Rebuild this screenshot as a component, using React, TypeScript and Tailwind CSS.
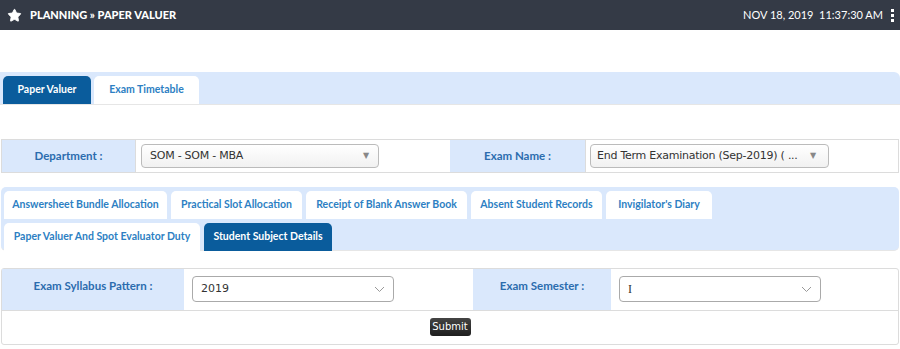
import { Star } from 'lucide-react';

const lato = { fontFamily: 'Lato, "Open Sans", sans-serif' };
const selectFont = { fontFamily: '"DejaVu Sans", Verdana, sans-serif' };

const topTabs = [
  { label: 'Paper Valuer', active: true, w: 'w-[88px]' },
  { label: 'Exam Timetable', active: false, w: 'w-[105px]' },
];

const subTabsRow1 = [
  { label: 'Answersheet Bundle Allocation', w: 'w-[163px]' },
  { label: 'Practical Slot Allocation', w: 'w-[131px]' },
  { label: 'Receipt of Blank Answer Book', w: 'w-[161px]' },
  { label: 'Absent Student Records', w: 'w-[131px]' },
  { label: "Invigilator's Diary", w: 'w-[106px]' },
];

const subTabsRow2 = [
  { label: 'Paper Valuer And Spot Evaluator Duty', w: 'w-[196px]', active: false },
  { label: 'Student Subject Details', w: 'w-[128px]', active: true },
];

function Tab({ label, active, w }: { label: string; active?: boolean; w: string }) {
  return (
    <div
      className={`${w} h-[28px] flex items-center justify-center rounded-t-[5px] text-[10.5px] font-bold whitespace-nowrap ${
        active ? 'bg-[#0a5c9c] text-white' : 'bg-white text-[#2d7fc3]'
      }`}
    >
      {label}
    </div>
  );
}

function Caret() {
  return <span className="text-[8px] text-[#888] leading-none">▼</span>;
}

function Chevron() {
  return (
    <svg width="11" height="7" viewBox="0 0 11 7" fill="none" stroke="#999" strokeWidth="1">
      <path d="M1 1l4.5 4.5L10 1" />
    </svg>
  );
}

export default function App() {
  return (
    <div className="w-[900px] h-[349px] bg-white overflow-hidden" style={lato}>
      {/* header */}
      <div className="h-[30px] bg-[#343a46] flex items-center pl-[7px] pr-[6px] text-white">
        <Star className="w-[15px] h-[15px] fill-white" strokeWidth={1.5} />
        <span className="ml-[8px] text-[11px] font-black">PLANNING » PAPER VALUER</span>
        <span className="ml-auto text-[11px] whitespace-pre">NOV 18, 2019  11:37:30 AM</span>
        <span className="ml-[8px] flex flex-col gap-[2px]">
          <span className="w-[3px] h-[3px] bg-white" />
          <span className="w-[3px] h-[3px] bg-white" />
          <span className="w-[3px] h-[3px] bg-white" />
        </span>
      </div>

      {/* main tabs */}
      <div className="mt-[42px] h-[33px] bg-[#dae8fc] rounded-tr-[6px] border-b border-[#e6e6e6] flex items-end gap-[3px] pl-[3px]">
        {topTabs.map((t) => (
          <Tab key={t.label} {...t} />
        ))}
      </div>

      {/* department row */}
      <div className="mt-[34px] mx-[1px] h-[34px] border border-[#dcdcdc] flex">
        <div className="w-[133px] bg-[#dae8fc] flex items-center justify-center text-[11.5px] font-bold text-[#2b6cae]">
          Department :
        </div>
        <div className="w-[315px] border-l border-[#dcdcdc] flex items-center pl-[5px]">
          <div
            className="w-[238px] h-[24px] rounded-[4px] border border-[#bbb] bg-gradient-to-b from-white to-[#f1f1f1] flex items-center justify-between pl-[8px] pr-[9px] text-[11px] tracking-[-0.25px] text-[#333]"
            style={selectFont}
          >
            <span>SOM - SOM - MBA</span>
            <Caret />
          </div>
        </div>
        <div className="w-[135px] bg-[#dae8fc] flex items-center justify-center text-[11.5px] font-bold text-[#2b6cae]">
          Exam Name :
        </div>
        <div className="flex-1 border-l border-[#dcdcdc] flex items-center pl-[4px]">
          <div
            className="w-[239px] h-[24px] rounded-[4px] border border-[#bbb] bg-gradient-to-b from-white to-[#f1f1f1] flex items-center justify-between pl-[6px] pr-[12px] text-[11px] tracking-[-0.25px] text-[#333] whitespace-nowrap"
            style={selectFont}
          >
            <span>End Term Examination (Sep-2019) ( ...</span>
            <Caret />
          </div>
        </div>
      </div>

      {/* sub tabs */}
      <div className="mt-[14px] mx-[1px] h-[64px] bg-[#dae8fc] rounded-[5px] border-b border-[#e6e6e6] pl-[3px] pt-[4px] flex flex-col gap-[4px]">
        <div className="flex gap-[4px]">
          {subTabsRow1.map((t) => (
            <Tab key={t.label} {...t} />
          ))}
        </div>
        <div className="flex gap-[4px]">
          {subTabsRow2.map((t) => (
            <Tab key={t.label} {...t} />
          ))}
        </div>
      </div>

      {/* form */}
      <div className="mt-[17px] mx-[1px] h-[77px] border border-[#dcdcdc] rounded-[3px] flex flex-col">
        <div className="h-[42px] border-b border-[#dcdcdc] flex">
          <div className="w-[182px] bg-[#dae8fc] flex justify-center pt-[8px] text-[11.5px] font-bold text-[#2b6cae]">
            Exam Syllabus Pattern :
          </div>
          <div className="w-[289px] flex items-start pt-[7px] pl-[8px]">
            <div
              className="w-[202px] h-[26px] rounded-[4px] border border-[#aaa] bg-white flex items-center justify-between pl-[8px] pr-[8px] text-[11px] text-[#333]"
              style={selectFont}
            >
              <span>2019</span>
              <Chevron />
            </div>
          </div>
          <div className="w-[138px] bg-[#dae8fc] flex justify-center pt-[8px] text-[11.5px] font-bold text-[#2b6cae]">
            Exam Semester :
          </div>
          <div className="flex-1 flex items-start pt-[7px] pl-[8px]">
            <div className="w-[202px] h-[26px] rounded-[4px] border border-[#aaa] bg-white flex items-center justify-between pl-[8px] pr-[8px] text-[12px] text-[#333]">
              <span style={{ fontFamily: '"Liberation Serif", serif' }}>I</span>
              <Chevron />
            </div>
          </div>
        </div>
        <div className="flex-1 flex justify-center pt-[7px]">
          <button
            className="h-[18px] w-[41px] rounded-[3px] bg-gradient-to-b from-[#444] to-[#1e1e1e] text-white text-[10px] leading-none"
            style={selectFont}
          >
            Submit
          </button>
        </div>
      </div>
    </div>
  );
}
